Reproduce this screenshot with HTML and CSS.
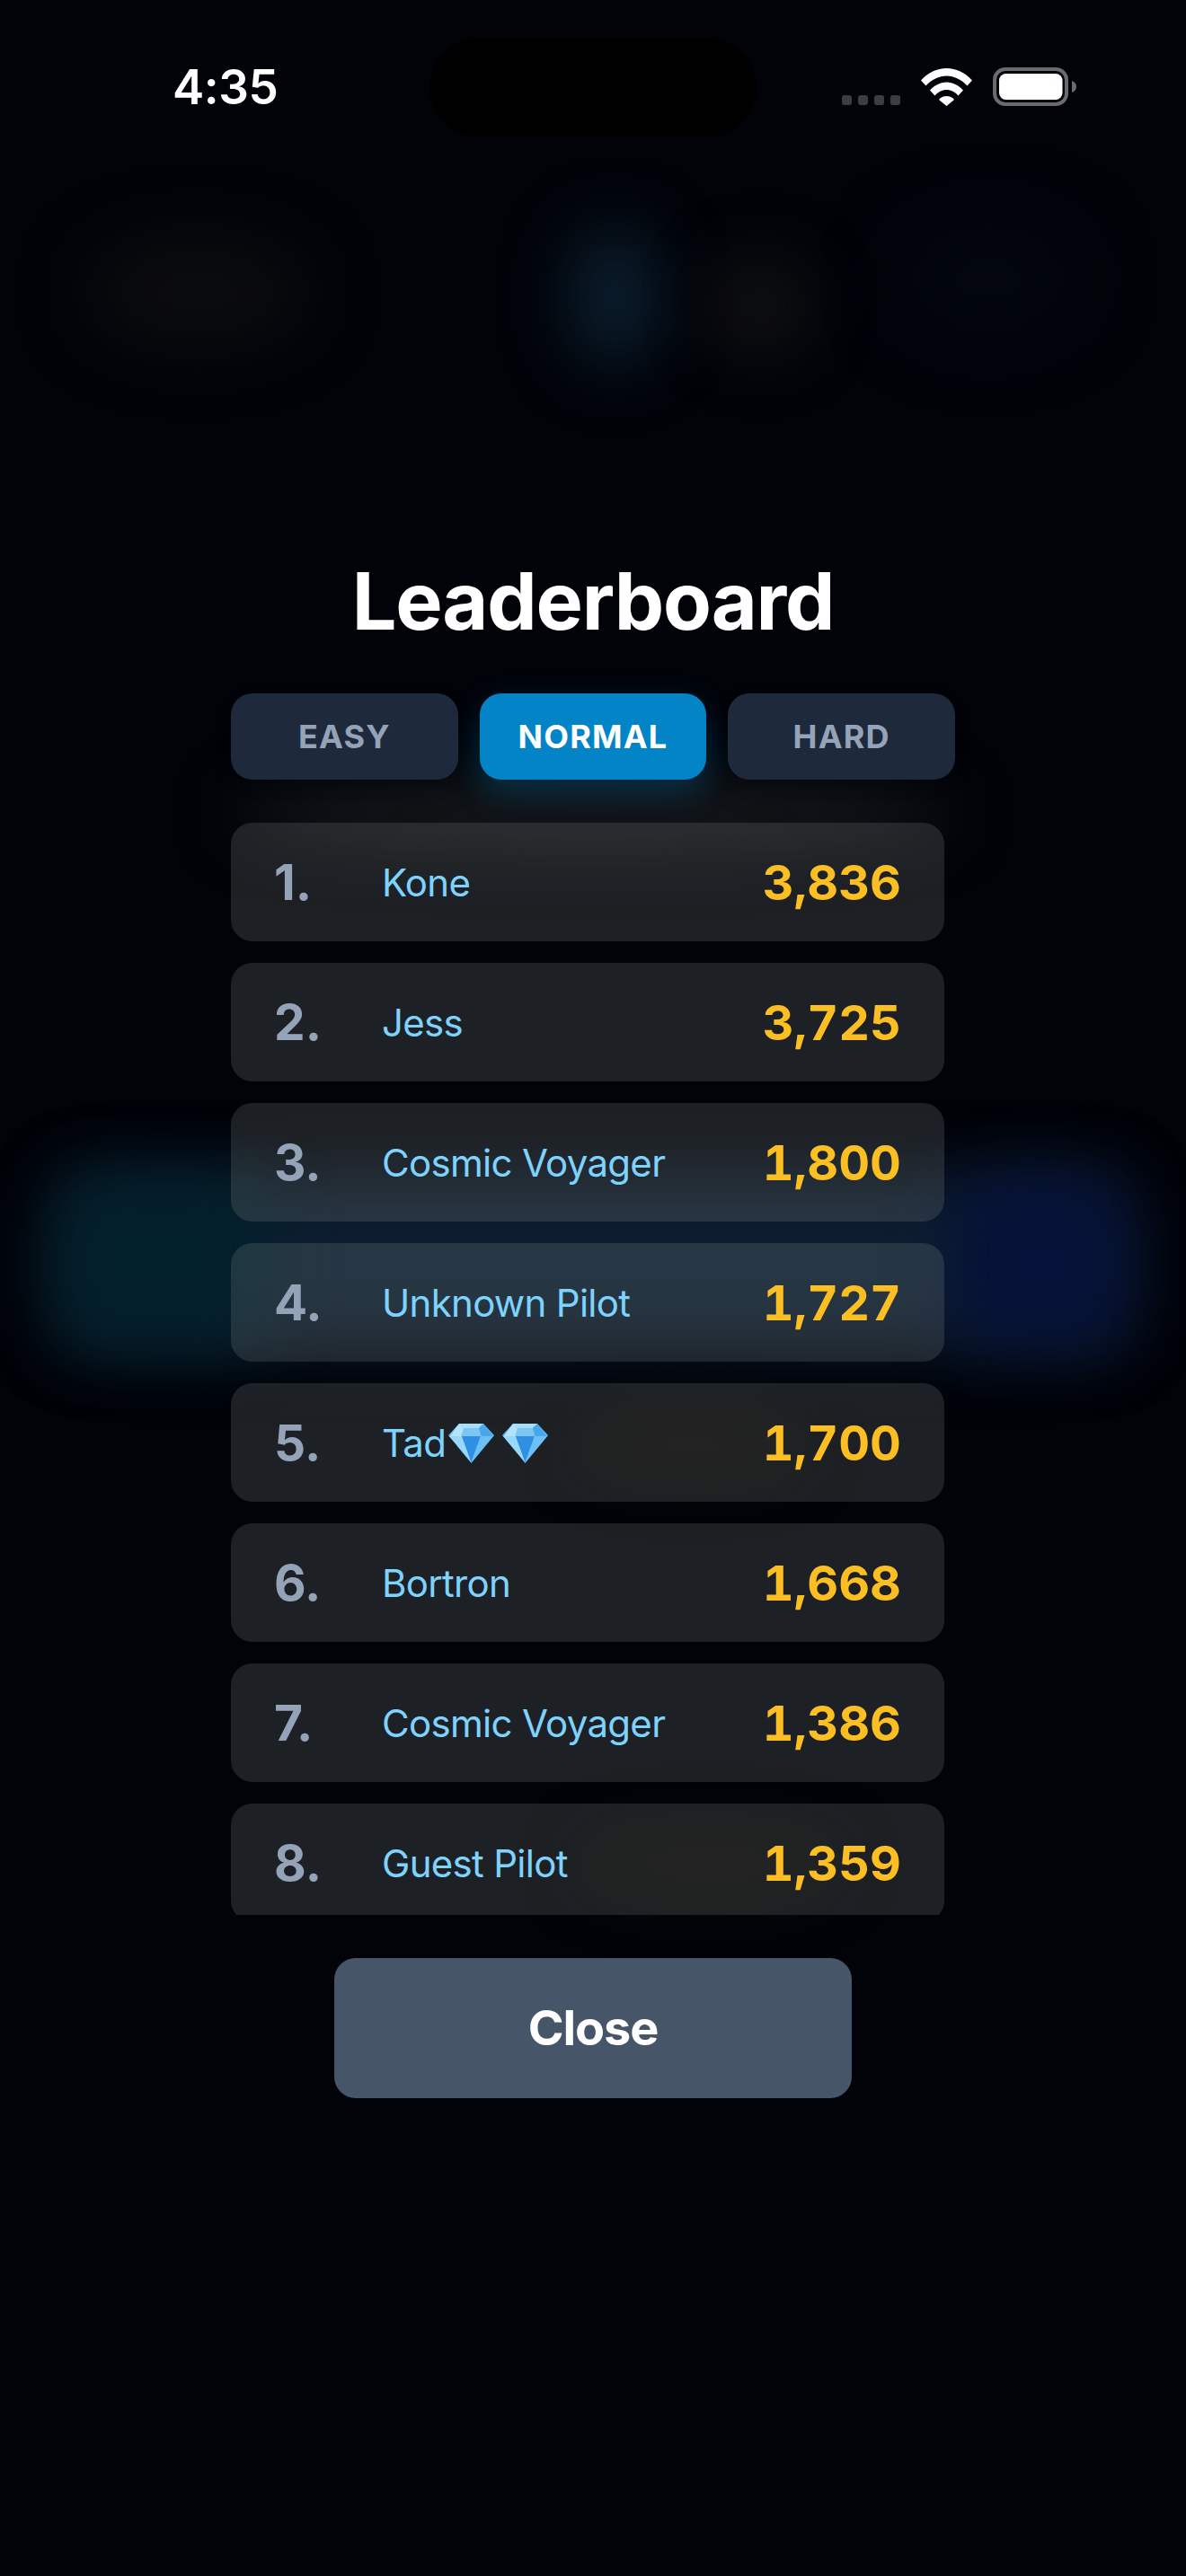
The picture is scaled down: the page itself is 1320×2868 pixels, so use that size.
FILE: index.html
```html
<!DOCTYPE html>
<html lang="en">
<head>
<meta charset="utf-8">
<title>Leaderboard</title>
<link rel="stylesheet" href="styles.css">
</head>
<body>
<div class="screen">
  <div class="backdrop">
    <div class="blob blob-blue"></div>
    <div class="blob blob-warm-left"></div>
    <div class="blob blob-warm-right"></div>
    <div class="blob blob-navy-top"></div>
    <div class="blob blob-band"></div>
    <div class="blob blob-teal"></div>
    <div class="blob blob-navy"></div>
    <div class="blob blob-glow"></div>
    <div class="blob blob-warm-row5"></div>
    <div class="blob blob-warm-row8"></div>
  </div>
  <div class="island"></div>
  <header class="status">
    <span class="time">4:35</span>
    <div class="status-icons">
      <div class="signal"><i></i><i></i><i></i><i></i></div>
      <svg class="wifi" viewBox="0 0 57 42" width="57" height="42">
        <path fill="#fff" d="M0 13.5C7.5 5 18 0 28.5 0S49.5 5 57 13.5L51.5 19.5C45 12.5 37 8.5 28.5 8.5S12 12.5 5.5 19.5Z"/>
        <path fill="#fff" d="M10 24.5C15 19 21.5 15.5 28.5 15.5S42 19 47 24.5L41.5 30.5C38 26.5 33.5 24 28.5 24S19 26.5 15.5 30.5Z"/>
        <path fill="#fff" d="M20 35C22 32.5 25 31 28.5 31S35 32.5 37 35L28.5 42Z"/>
      </svg>
      <svg class="battery" viewBox="0 0 93 43" width="93" height="43">
        <rect x="2" y="2" width="80" height="39" rx="12" fill="none" stroke="#6b6b6e" stroke-width="4"/>
        <rect x="7" y="7" width="70.5" height="29" rx="7.5" fill="#fff"/>
        <path fill="#6b6b6e" d="M88 15C91 16 93 18.500 93 21.500S91 27 88 28Z"/>
      </svg>
    </div>
  </header>
  <main class="modal">
    <h1 class="title">Leaderboard</h1>
    <div class="tabs">
      <button class="tab">EASY</button>
      <button class="tab tab-active">NORMAL</button>
      <button class="tab">HARD</button>
    </div>
    <ol class="list">
      <li class="row"><span class="rank">1.</span><span class="name">Kone</span><span class="score">3,836</span></li>
      <li class="row"><span class="rank">2.</span><span class="name">Jess</span><span class="score">3,725</span></li>
      <li class="row"><span class="rank">3.</span><span class="name">Cosmic Voyager</span><span class="score">1,800</span></li>
      <li class="row"><span class="rank">4.</span><span class="name">Unknown Pilot</span><span class="score">1,727</span></li>
      <li class="row"><span class="rank">5.</span><span class="name">Tad<svg class="gem" viewBox="0 0 51 45" width="51" height="45" role="img" aria-label="gem"><use href="#gem"/></svg><svg class="gem" viewBox="0 0 51 45" width="51" height="45" role="img" aria-label="gem"><use href="#gem"/></svg></span><span class="score">1,700</span></li>
      <li class="row"><span class="rank">6.</span><span class="name">Bortron</span><span class="score">1,668</span></li>
      <li class="row"><span class="rank">7.</span><span class="name">Cosmic Voyager</span><span class="score">1,386</span></li>
      <li class="row"><span class="rank">8.</span><span class="name">Guest Pilot</span><span class="score">1,359</span></li>
    </ol>
    <button class="close">Close</button>
  </main>
  <svg class="defs" width="0" height="0">
    <symbol id="gem" viewBox="0 0 51 45">
      <path fill="#5fb8f2" d="M12 1H39L51 14 25.500 45 0 14Z"/>
      <path fill="#a9def9" d="M12 1H39L34 6H17Z"/>
      <path fill="#7cc6f4" d="M17 6H34L37 16H14Z"/>
      <path fill="#b5e3fb" d="M12 1 17 6 14 16H1Z"/>
      <path fill="#4aa6ea" d="M39 1 34 6 37 16H50Z"/>
      <path fill="#9ad8f9" d="M1 15H15L25.500 44Z"/>
      <path fill="#2f8fe3" d="M15 15H36L25.500 44Z"/>
      <path fill="#6cc0f3" d="M36 15H50L25.500 44Z"/>
    </symbol>
  </svg>
</div>
</body>
</html>
```
FILE: styles.css
```css
* { box-sizing: border-box; margin: 0; padding: 0; }
html, body { background: #010309; }
body { font-family: "Inter", "Liberation Sans", sans-serif; color: #fff; }
.screen { position: relative; width: 1320px; height: 2868px; overflow: hidden; background: #010309; }

.backdrop { position: absolute; inset: 0; }
.blob { position: absolute; border-radius: 50%; }
.blob-blue { left: 634px; top: 255px; width: 100px; height: 150px; background: #0c2030; filter: blur(36px); }
.blob-warm-left { left: 100px; top: 270px; width: 240px; height: 110px; background: #0c0d0e; filter: blur(38px); }
.blob-warm-right { left: 785px; top: 285px; width: 120px; height: 110px; background: #0e0f10; filter: blur(32px); }
.blob-navy-top { left: 1000px; top: 250px; width: 200px; height: 120px; background: #03070f; filter: blur(40px); }
.blob-band { left: 70px; top: 1310px; width: 1180px; height: 190px; border-radius: 40px; background: #0d1e30; filter: blur(36px); }
.blob-teal { left: 60px; top: 1310px; width: 240px; height: 190px; border-radius: 40px; background: #02202b; filter: blur(34px); }
.blob-navy { left: 1060px; top: 1310px; width: 195px; height: 190px; border-radius: 40px; background: #051138; filter: blur(34px); }
.blob-glow { left: 260px; top: 865px; width: 800px; height: 80px; background: #15181b; filter: blur(34px); }
.blob-warm-row5 { left: 640px; top: 1570px; width: 260px; height: 80px; background: #090807; filter: blur(30px); }
.blob-warm-row8 { left: 640px; top: 2030px; width: 300px; height: 90px; background: #080807; filter: blur(30px); }

.island { position: absolute; left: 478px; top: 42px; width: 364px; height: 110px; border-radius: 55px; background: #000; }

.status { position: relative; display: flex; justify-content: space-between; align-items: flex-start; height: 130px; padding: 65px 122px 0 192px; }
.time { font-size: 53px; font-weight: 600; line-height: 64px; letter-spacing: -0.5px; }
.status-icons { display: flex; align-items: flex-end; gap: 23px; padding-top: 10px; }
.signal { display: flex; gap: 7px; padding-bottom: 1px; }
.signal i { display: block; width: 11px; height: 11px; border-radius: 3px; background: #3d3d40; }
.wifi, .battery { display: block; }

.modal { position: relative; display: flex; flex-direction: column; align-items: center; width: 806px; margin: 485px 0 0 257px; }
.title { font-size: 88px; font-weight: 700; line-height: 108px; margin-bottom: 49px; letter-spacing: -1.2px; }

.tabs { display: flex; gap: 24px; width: 100%; }
.tab { flex: 1; height: 96px; border: 0; border-radius: 24px; background: #1e293b; color: #94a3b8; font: 700 36px/1 "Inter", sans-serif; letter-spacing: 1.2px; box-shadow: 0 6px 18px rgba(0, 0, 0, .2); }
.tab-active { background: #0284c7; color: #fff; box-shadow: 0 14px 36px rgba(2, 132, 199, .3); }

.list { list-style: none; align-self: flex-start; display: flex; flex-direction: column; gap: 24px; width: 794px; height: 1216px; margin-top: 48px; overflow: hidden; }
.row { display: flex; align-items: center; flex: none; height: 132px; padding: 0 48px; border-radius: 24px; background: rgba(165, 170, 165, .175); }
.rank { width: 120px; flex: none; color: #94a3b8; font-size: 55px; font-weight: 700; }
.name { flex: 1; display: flex; align-items: center; color: #7dd3fc; font-size: 42px; letter-spacing: -0.7px; }
.gem { display: block; flex: none; margin-left: 3px; }
.gem + .gem { margin-left: 9px; }
.score { color: #fbbf24; font-size: 54px; font-weight: 700; font-variant-numeric: tabular-nums; }

.close { width: 576px; height: 156px; margin-top: 48px; border: 0; border-radius: 24px; background: #475569; color: #fff; font: 700 54px/1 "Inter", sans-serif; letter-spacing: -1.1px; }

.defs { position: absolute; }
```
